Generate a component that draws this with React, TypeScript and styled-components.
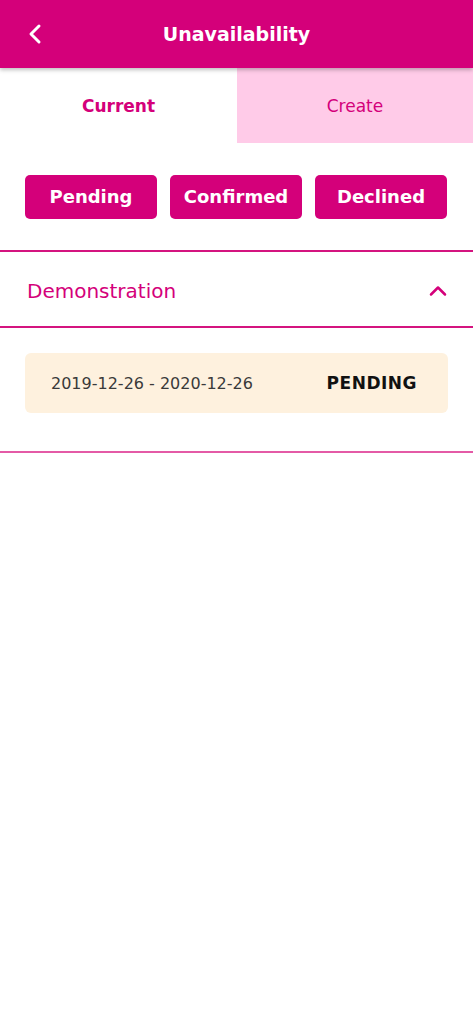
import styled, { createGlobalStyle } from "styled-components";

const GlobalStyle = createGlobalStyle`
  html, body {
    margin: 0;
    padding: 0;
    background: #ffffff;
    font-family: "DejaVu Sans", "Noto Sans", sans-serif;
  }
`;

const Page = styled.div`
  width: 473px;
  min-height: 1024px;
  background: #ffffff;
`;

const Header = styled.header`
  height: 68px;
  background-color: #d4007a;
  display: flex;
  align-items: center;
  justify-content: center;
  position: relative;
  box-shadow: 0 2px 4px rgba(0, 0, 0, 0.25);
  z-index: 1;
`;

const BackButton = styled.button`
  position: absolute;
  left: 22px;
  top: 20px;
  width: 28px;
  height: 28px;
  padding: 0;
  border: none;
  background: transparent;
  display: flex;
  align-items: center;
  justify-content: center;
`;

const Title = styled.h1`
  margin: 0;
  color: #ffffff;
  font-size: 19px;
  font-weight: bold;
`;

const Tabs = styled.div`
  display: grid;
  grid-template-columns: 237px 1fr;
  height: 75px;
`;

const Tab = styled.div<{ $active?: boolean }>`
  display: flex;
  align-items: center;
  justify-content: center;
  background-color: ${(p) => (p.$active ? "#ffffff" : "#ffcbe8")};
  color: #d4007a;
  font-size: 17px;
  font-weight: ${(p) => (p.$active ? "bold" : "normal")};
`;

const FilterRow = styled.div`
  display: flex;
  gap: 13px;
  padding: 32px 25px 31px;
  border-bottom: 2px solid #d4147f;
`;

const FilterButton = styled.button`
  width: 132px;
  height: 44px;
  border: none;
  border-radius: 5px;
  background-color: #d4007a;
  color: #ffffff;
  font-family: inherit;
  font-size: 18px;
  font-weight: bold;
  padding: 0 0 2px;
`;

const Section = styled.section`
  border-bottom: 2px solid #e45aa6;
`;

const SectionHeader = styled.div`
  height: 70px;
  display: flex;
  align-items: center;
  justify-content: space-between;
  padding: 4px 23px 0 27px;
  border-bottom: 2px solid #d4147f;
`;

const SectionTitle = styled.span`
  color: #d4007a;
  font-size: 20px;
`;

const SectionBody = styled.div`
  padding: 25px 25px 38px;
`;

const Entry = styled.div`
  height: 60px;
  border-radius: 6px;
  background-color: #fef1de;
  display: flex;
  align-items: center;
  justify-content: space-between;
  padding: 0 31px 0 26px;
`;

const Dates = styled.span`
  color: #3a3a3a;
  font-size: 16px;
  font-weight: normal;
`;

const Status = styled.span`
  color: #111111;
  font-size: 17px;
  font-weight: bold;
  letter-spacing: 0.5px;
`;

export default function App() {
  return (
    <Page>
      <GlobalStyle />
      <Header>
        <BackButton aria-label="Back">
          <svg width="28" height="28" viewBox="0 0 28 28" fill="none">
            <path
              d="M17 6 L9 14 L17 22"
              stroke="#ffffff"
              strokeWidth="3"
              strokeLinecap="round"
              strokeLinejoin="round"
            />
          </svg>
        </BackButton>
        <Title>Unavailability</Title>
      </Header>
      <Tabs>
        <Tab $active>Current</Tab>
        <Tab>Create</Tab>
      </Tabs>
      <FilterRow>
        <FilterButton>Pending</FilterButton>
        <FilterButton>Confirmed</FilterButton>
        <FilterButton>Declined</FilterButton>
      </FilterRow>
      <Section>
        <SectionHeader>
          <SectionTitle>Demonstration</SectionTitle>
          <svg width="24" height="24" viewBox="0 0 24 24" fill="none">
            <path
              d="M5 15.5 L12 8.5 L19 15.5"
              stroke="#d4007a"
              strokeWidth="2.5"
              strokeLinecap="round"
              strokeLinejoin="round"
            />
          </svg>
        </SectionHeader>
        <SectionBody>
          <Entry>
            <Dates>2019-12-26 - 2020-12-26</Dates>
            <Status>PENDING</Status>
          </Entry>
        </SectionBody>
      </Section>
    </Page>
  );
}
